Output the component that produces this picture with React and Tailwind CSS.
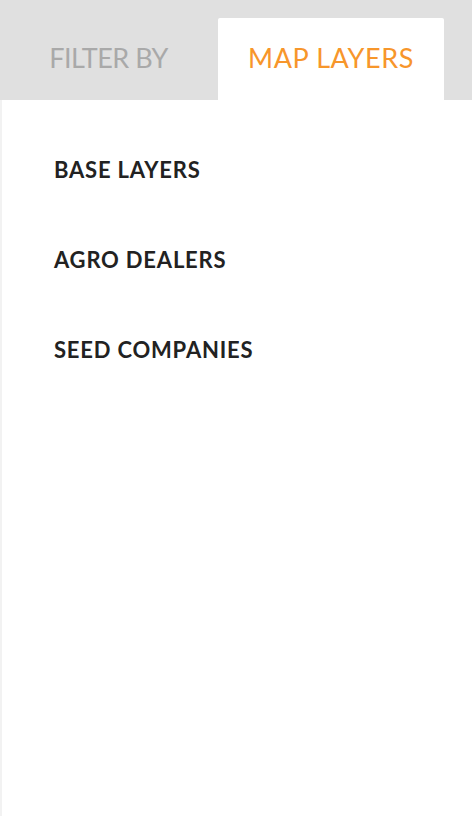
import React from 'react';

const LAYERS = ['BASE LAYERS', 'AGRO DEALERS', 'SEED COMPANIES'];

const App = () => {
    return (
        <div className="w-[472px] h-[816px] bg-white flex flex-col" style={{ fontFamily: '"Lato", "Liberation Sans", sans-serif' }}>
            {/* Tabs */}
            <div className="h-[100px] bg-[#e0e0e0] flex items-end shrink-0">
                <button className="w-[217px] h-[82px] pb-[2px] flex items-center justify-center text-[27px] text-[#a9a9a9] tracking-[-0.5px]">
                    FILTER BY
                </button>
                <button className="ml-[1px] w-[226px] h-[82px] pb-[2px] bg-white rounded-t-[2px] flex items-center justify-center text-[27px] text-[#f7962b] tracking-[0.6px]">
                    MAP LAYERS
                </button>
            </div>

            {/* Layer list */}
            <div className="flex-1 border-l-2 border-[#f2f2f2] pl-[52px] pt-[54px] flex flex-col gap-[60px]">
                {LAYERS.map(name => (
                    <div key={name} className="h-[30px] flex items-center text-[22px] font-bold text-[#222] tracking-[0.8px]">
                        {name}
                    </div>
                ))}
            </div>
        </div>
    );
};

export default App;
